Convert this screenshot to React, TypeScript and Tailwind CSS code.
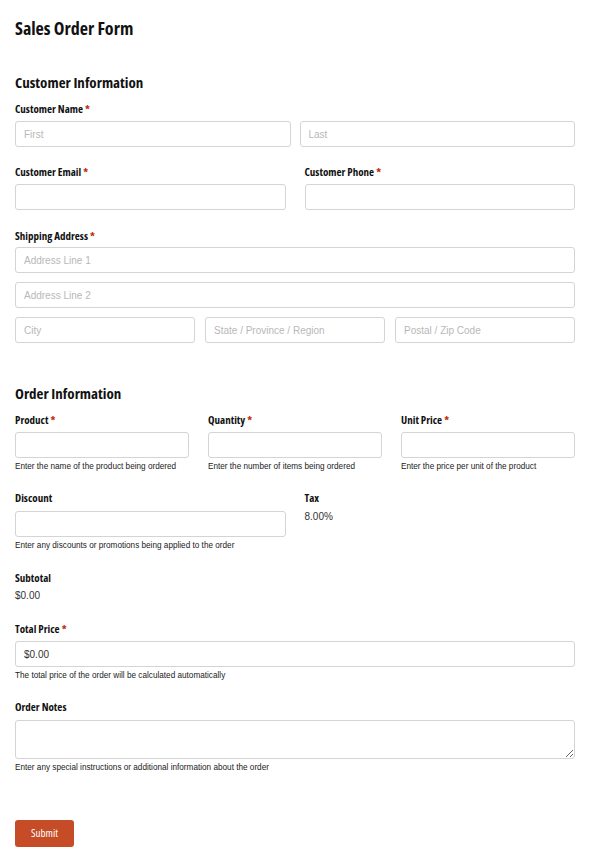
import React from "react";

const head = "font-['Open_Sans','DejaVu_Sans',sans-serif] font-stretch-condensed font-bold text-[#111]";
const body = "font-['Liberation_Sans',Arial,sans-serif]";
const inputCls =
  "block h-[26px] w-full rounded-[3px] border border-[#d4d4d4] bg-white px-[8px] text-[10px] text-[#333] placeholder:text-[#b8b8b8] font-['Liberation_Sans',Arial,sans-serif] outline-none";

function Label({ text, required }: { text: string; required?: boolean }) {
  return (
    <div className={`${head} text-[11px] leading-[16px]`}>
      {text}
      {required && <span className="ml-[2px] text-[#c02b0a]">*</span>}
    </div>
  );
}

function Help({ children }: { children: React.ReactNode }) {
  return (
    <div className={`${body} mt-[3px] text-[8.2px] leading-[12px] text-[#222]`}>
      {children}
    </div>
  );
}

export default function App() {
  return (
    <div className="min-h-screen bg-white px-[15px] pt-[17px] pb-[16px]">
      <h1 className={`${head} text-[18px] leading-[22px]`}>Sales Order Form</h1>

      {/* Customer Information */}
      <h2 className={`${head} mt-[33px] text-[15px] leading-[20px]`}>
        Customer Information
      </h2>

      <div className="mt-[9px]">
        <Label text="Customer Name" required />
        <div className="mt-[4px] grid grid-cols-2 gap-[9px]">
          <input className={inputCls} placeholder="First" />
          <input className={inputCls} placeholder="Last" />
        </div>
      </div>

      <div className="mt-[17px] grid grid-cols-2 gap-[19px]">
        <div>
          <Label text="Customer Email" required />
          <input className={`${inputCls} mt-[4px]`} />
        </div>
        <div>
          <Label text="Customer Phone" required />
          <input className={`${inputCls} mt-[4px]`} />
        </div>
      </div>

      <div className="mt-[18px]">
        <Label text="Shipping Address" required />
        <div className="mt-[3px] flex flex-col gap-[9px]">
          <input className={inputCls} placeholder="Address Line 1" />
          <input className={inputCls} placeholder="Address Line 2" />
          <div className="grid grid-cols-3 gap-[10px]">
            <input className={inputCls} placeholder="City" />
            <input className={inputCls} placeholder="State / Province / Region" />
            <input className={inputCls} placeholder="Postal / Zip Code" />
          </div>
        </div>
      </div>

      {/* Order Information */}
      <h2 className={`${head} mt-[40px] text-[15px] leading-[20px]`}>
        Order Information
      </h2>

      <div className="mt-[9px] grid grid-cols-3 gap-[19px]">
        <div>
          <Label text="Product" required />
          <input className={`${inputCls} mt-[4px]`} />
          <Help>Enter the name of the product being ordered</Help>
        </div>
        <div>
          <Label text="Quantity" required />
          <input className={`${inputCls} mt-[4px]`} />
          <Help>Enter the number of items being ordered</Help>
        </div>
        <div>
          <Label text="Unit Price" required />
          <input className={`${inputCls} mt-[4px]`} />
          <Help>Enter the price per unit of the product</Help>
        </div>
      </div>

      <div className="mt-[17px] grid grid-cols-2 gap-[19px]">
        <div>
          <Label text="Discount" />
          <input className={`${inputCls} mt-[5px]`} />
          <Help>Enter any discounts or promotions being applied to the order</Help>
        </div>
        <div>
          <Label text="Tax" />
          <div className={`${body} mt-[4px] text-[10px] leading-[14px] text-[#333]`}>8.00%</div>
        </div>
      </div>

      <div className="mt-[18px]">
        <Label text="Subtotal" />
        <div className={`${body} mt-[3px] text-[10px] leading-[14px] text-[#333]`}>$0.00</div>
      </div>

      <div className="mt-[18px]">
        <Label text="Total Price" required />
        <input className={`${inputCls} mt-[4px]`} defaultValue="$0.00" />
        <Help>The total price of the order will be calculated automatically</Help>
      </div>

      <div className="mt-[17px]">
        <Label text="Order Notes" />
        <textarea
          className={`${inputCls} mt-[5px] h-[39px] resize-y py-[4px]`}
        />
        <Help>Enter any special instructions or additional information about the order</Help>
      </div>

      <button
        className={`${head} mt-[46px] h-[27px] w-[59px] rounded-[3px] bg-[#c64c27] text-[11px] font-normal text-white`}
      >
        Submit
      </button>
    </div>
  );
}
